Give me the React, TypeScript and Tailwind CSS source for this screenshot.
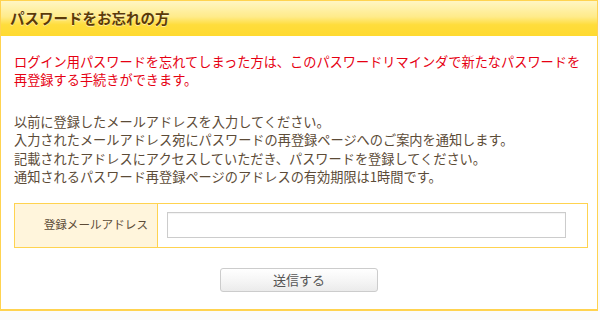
export default function App() {
  return (
    <div
      className="w-[600px] h-[320px] bg-[#fafafa] overflow-hidden"
      style={{ fontFamily: '"Noto Sans CJK JP", "Noto Sans", sans-serif' }}
    >
      <div className="w-[598px] h-[311px] border border-[#ffd350] border-b-2 bg-white flex flex-col">
        <div className="h-[35px] shrink-0 flex items-center pl-[9px] bg-[linear-gradient(to_bottom,#fff6c4_0%,#ffeb8a_45%,#ffdd3c_68%,#ffda30_100%)]">
          <h1 className="text-[14.5px] font-bold text-[#5b3a08] leading-none [text-shadow:0_1px_0_rgba(255,255,255,0.5)]">
            パスワードをお忘れの方
          </h1>
        </div>
        <div className="pl-[13px] pr-[12px] pt-[17px]">
          <p className="text-[13.2px] leading-[18px] text-[#e60012]">
            ログイン用パスワードを忘れてしまった方は、このパスワードリマインダで新たなパスワードを
            <br />
            再登録する手続きができます。
          </p>
          <p className="mt-[24px] text-[13.2px] leading-[18.4px] text-[#5c4b37]">
            以前に登録したメールアドレスを入力してください。
            <br />
            入力されたメールアドレス宛にパスワードの再登録ページへのご案内を通知します。
            <br />
            記載されたアドレスにアクセスしていただき、パスワードを登録してください。
            <br />
            通知されるパスワード再登録ページのアドレスの有効期限は1時間です。
          </p>
          <div className="mt-[16px] w-[574px] h-[45px] border border-[#ffd350] flex">
            <div className="w-[143px] shrink-0 bg-[#fff5dc] border-r border-[#ffd350] flex items-center justify-end pr-[9px] text-[11.6px] text-[#5c4b37]">
              登録メールアドレス
            </div>
            <div className="flex items-center pl-[9px]">
              <input
                type="text"
                className="w-[399px] h-[26px] border border-[#cccccc] bg-white outline-none shadow-[inset_0_1px_1px_rgba(0,0,0,0.05)]"
              />
            </div>
          </div>
          <div className="mt-[20px] flex justify-center pr-[1px]">
            <button className="w-[158px] h-[24px] border border-[#cccccc] rounded-[3px] bg-[linear-gradient(to_bottom,#ffffff_0%,#f4f4f4_60%,#ebebeb_100%)] text-[13px] text-[#555555] leading-none flex items-center justify-center">
              送信する
            </button>
          </div>
        </div>
      </div>
    </div>
  );
}
